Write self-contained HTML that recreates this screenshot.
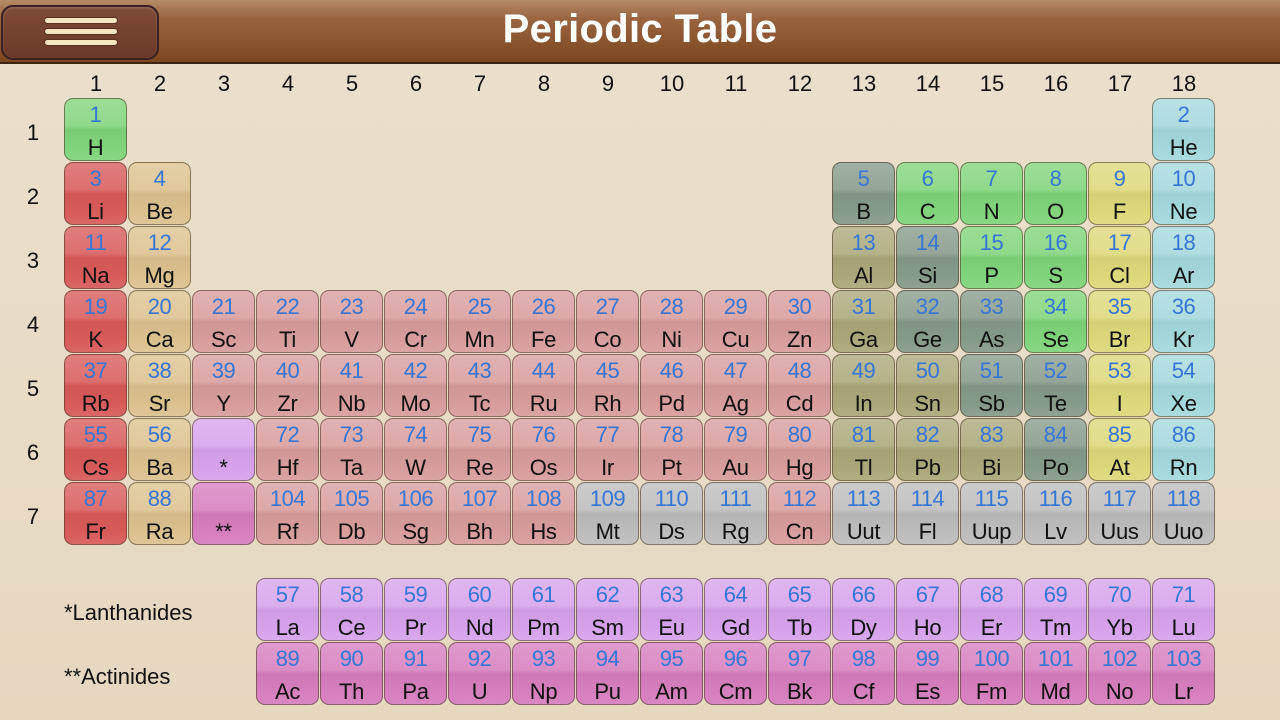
<!DOCTYPE html>
<html><head><meta charset="utf-8"><style>
*{margin:0;padding:0;box-sizing:border-box}
body{width:1280px;height:720px;overflow:hidden;font-family:"Liberation Sans",sans-serif;background:linear-gradient(#ebe0cc,#e6d8bf);position:relative}
.hdr{position:absolute;left:0;top:0;width:1280px;height:64px;background:linear-gradient(#b58a68 0%,#9a6440 30%,#7c4620 100%);border-bottom:2px solid #3e2412}
.hdr h1{position:absolute;left:0;right:0;top:7px;text-align:center;color:#fff;font-size:40px;font-weight:bold;letter-spacing:0.3px}
.menu{position:absolute;left:1px;top:5px;width:158px;height:55px;border-radius:12px;border:2px solid #3a2020;background:linear-gradient(#7e4c38,#6a3a28);box-shadow:inset 0 1px 2px rgba(255,255,255,.2)}
.menu i{position:absolute;left:41px;width:74px;height:7px;border-radius:4px;background:#f4e6c0;border:1px solid #5a3020}
.cn{position:absolute;font-size:22px;color:#111;width:64px;text-align:center}
.rn{position:absolute;left:20px;font-size:22px;color:#111;width:26px;text-align:center}
.g{position:absolute;left:64px;display:grid;grid-template-columns:repeat(18,64px);grid-auto-rows:64px}
.g2{position:absolute;left:256px;top:578px;display:grid;grid-template-columns:repeat(15,64px);grid-template-rows:repeat(2,64px)}
.c{width:63px;height:63px;border-radius:9px;border:1px solid rgba(70,50,30,.55);position:relative;text-align:center;
background:linear-gradient(rgba(255,255,255,.22),rgba(255,255,255,.12) 44%,rgba(0,0,0,.04) 50%,rgba(0,0,0,0) 80%,rgba(255,255,255,.08)),var(--c)}
.c b{position:absolute;left:0;right:0;top:2px;font-weight:normal;font-size:22px;line-height:28px;color:#3676d6;letter-spacing:-0.5px}
.c s{position:absolute;left:0;right:0;top:35px;text-decoration:none;font-size:22px;line-height:28px;color:#111;letter-spacing:-0.3px}
.a{--c:#d85a5a}.e{--c:#dcc18e}.t{--c:#d89c9c}.p{--c:#aaa87a}.m{--c:#869a8a}.n{--c:#80d47a}.h{--c:#dcd87a}.o{--c:#a4d8dc}.u{--c:#bcbcbc}.L{--c:#d6a2ec}.A{--c:#d67ebe}
.lab{position:absolute;left:64px;font-size:22px;color:#111}
</style></head><body>
<div class="hdr"><div class="menu"><i style="top:10px"></i><i style="top:21px"></i><i style="top:32px"></i></div><h1>Periodic Table</h1></div>
<div class="cn" style="left:64px;top:71px">1</div><div class="cn" style="left:128px;top:71px">2</div><div class="cn" style="left:192px;top:71px">3</div><div class="cn" style="left:256px;top:71px">4</div><div class="cn" style="left:320px;top:71px">5</div><div class="cn" style="left:384px;top:71px">6</div><div class="cn" style="left:448px;top:71px">7</div><div class="cn" style="left:512px;top:71px">8</div><div class="cn" style="left:576px;top:71px">9</div><div class="cn" style="left:640px;top:71px">10</div><div class="cn" style="left:704px;top:71px">11</div><div class="cn" style="left:768px;top:71px">12</div><div class="cn" style="left:832px;top:71px">13</div><div class="cn" style="left:896px;top:71px">14</div><div class="cn" style="left:960px;top:71px">15</div><div class="cn" style="left:1024px;top:71px">16</div><div class="cn" style="left:1088px;top:71px">17</div><div class="cn" style="left:1152px;top:71px">18</div>
<div class="rn" style="top:120px">1</div><div class="rn" style="top:184px">2</div><div class="rn" style="top:248px">3</div><div class="rn" style="top:312px">4</div><div class="rn" style="top:376px">5</div><div class="rn" style="top:440px">6</div><div class="rn" style="top:504px">7</div>
<div class="g" style="top:98px;grid-template-rows:repeat(3,64px)">
<div class="c n" style="grid-area:1/1"><b>1</b><s>H</s></div>
<div class="c o" style="grid-area:1/18"><b>2</b><s>He</s></div>
<div class="c a" style="grid-area:2/1"><b>3</b><s>Li</s></div><div class="c e" style="grid-area:2/2"><b>4</b><s>Be</s></div>
<div class="c m" style="grid-area:2/13"><b>5</b><s>B</s></div><div class="c n" style="grid-area:2/14"><b>6</b><s>C</s></div><div class="c n" style="grid-area:2/15"><b>7</b><s>N</s></div><div class="c n" style="grid-area:2/16"><b>8</b><s>O</s></div><div class="c h" style="grid-area:2/17"><b>9</b><s>F</s></div><div class="c o" style="grid-area:2/18"><b>10</b><s>Ne</s></div>
<div class="c a" style="grid-area:3/1"><b>11</b><s>Na</s></div><div class="c e" style="grid-area:3/2"><b>12</b><s>Mg</s></div>
<div class="c p" style="grid-area:3/13"><b>13</b><s>Al</s></div><div class="c m" style="grid-area:3/14"><b>14</b><s>Si</s></div><div class="c n" style="grid-area:3/15"><b>15</b><s>P</s></div><div class="c n" style="grid-area:3/16"><b>16</b><s>S</s></div><div class="c h" style="grid-area:3/17"><b>17</b><s>Cl</s></div><div class="c o" style="grid-area:3/18"><b>18</b><s>Ar</s></div>
</div>
<div class="g" style="top:290px">
<div class="c a"><b>19</b><s>K</s></div><div class="c e"><b>20</b><s>Ca</s></div><div class="c t"><b>21</b><s>Sc</s></div><div class="c t"><b>22</b><s>Ti</s></div><div class="c t"><b>23</b><s>V</s></div><div class="c t"><b>24</b><s>Cr</s></div><div class="c t"><b>25</b><s>Mn</s></div><div class="c t"><b>26</b><s>Fe</s></div><div class="c t"><b>27</b><s>Co</s></div><div class="c t"><b>28</b><s>Ni</s></div><div class="c t"><b>29</b><s>Cu</s></div><div class="c t"><b>30</b><s>Zn</s></div><div class="c p"><b>31</b><s>Ga</s></div><div class="c m"><b>32</b><s>Ge</s></div><div class="c m"><b>33</b><s>As</s></div><div class="c n"><b>34</b><s>Se</s></div><div class="c h"><b>35</b><s>Br</s></div><div class="c o"><b>36</b><s>Kr</s></div>
<div class="c a"><b>37</b><s>Rb</s></div><div class="c e"><b>38</b><s>Sr</s></div><div class="c t"><b>39</b><s>Y</s></div><div class="c t"><b>40</b><s>Zr</s></div><div class="c t"><b>41</b><s>Nb</s></div><div class="c t"><b>42</b><s>Mo</s></div><div class="c t"><b>43</b><s>Tc</s></div><div class="c t"><b>44</b><s>Ru</s></div><div class="c t"><b>45</b><s>Rh</s></div><div class="c t"><b>46</b><s>Pd</s></div><div class="c t"><b>47</b><s>Ag</s></div><div class="c t"><b>48</b><s>Cd</s></div><div class="c p"><b>49</b><s>In</s></div><div class="c p"><b>50</b><s>Sn</s></div><div class="c m"><b>51</b><s>Sb</s></div><div class="c m"><b>52</b><s>Te</s></div><div class="c h"><b>53</b><s>I</s></div><div class="c o"><b>54</b><s>Xe</s></div>
<div class="c a"><b>55</b><s>Cs</s></div><div class="c e"><b>56</b><s>Ba</s></div><div class="c L"><b></b><s>*</s></div><div class="c t"><b>72</b><s>Hf</s></div><div class="c t"><b>73</b><s>Ta</s></div><div class="c t"><b>74</b><s>W</s></div><div class="c t"><b>75</b><s>Re</s></div><div class="c t"><b>76</b><s>Os</s></div><div class="c t"><b>77</b><s>Ir</s></div><div class="c t"><b>78</b><s>Pt</s></div><div class="c t"><b>79</b><s>Au</s></div><div class="c t"><b>80</b><s>Hg</s></div><div class="c p"><b>81</b><s>Tl</s></div><div class="c p"><b>82</b><s>Pb</s></div><div class="c p"><b>83</b><s>Bi</s></div><div class="c m"><b>84</b><s>Po</s></div><div class="c h"><b>85</b><s>At</s></div><div class="c o"><b>86</b><s>Rn</s></div>
<div class="c a"><b>87</b><s>Fr</s></div><div class="c e"><b>88</b><s>Ra</s></div><div class="c A"><b></b><s>**</s></div><div class="c t"><b>104</b><s>Rf</s></div><div class="c t"><b>105</b><s>Db</s></div><div class="c t"><b>106</b><s>Sg</s></div><div class="c t"><b>107</b><s>Bh</s></div><div class="c t"><b>108</b><s>Hs</s></div><div class="c u"><b>109</b><s>Mt</s></div><div class="c u"><b>110</b><s>Ds</s></div><div class="c u"><b>111</b><s>Rg</s></div><div class="c t"><b>112</b><s>Cn</s></div><div class="c u"><b>113</b><s>Uut</s></div><div class="c u"><b>114</b><s>Fl</s></div><div class="c u"><b>115</b><s>Uup</s></div><div class="c u"><b>116</b><s>Lv</s></div><div class="c u"><b>117</b><s>Uus</s></div><div class="c u"><b>118</b><s>Uuo</s></div>
</div>
<div class="lab" style="top:600px">*Lanthanides</div>
<div class="lab" style="top:664px">**Actinides</div>
<div class="g2">
<div class="c L"><b>57</b><s>La</s></div><div class="c L"><b>58</b><s>Ce</s></div><div class="c L"><b>59</b><s>Pr</s></div><div class="c L"><b>60</b><s>Nd</s></div><div class="c L"><b>61</b><s>Pm</s></div><div class="c L"><b>62</b><s>Sm</s></div><div class="c L"><b>63</b><s>Eu</s></div><div class="c L"><b>64</b><s>Gd</s></div><div class="c L"><b>65</b><s>Tb</s></div><div class="c L"><b>66</b><s>Dy</s></div><div class="c L"><b>67</b><s>Ho</s></div><div class="c L"><b>68</b><s>Er</s></div><div class="c L"><b>69</b><s>Tm</s></div><div class="c L"><b>70</b><s>Yb</s></div><div class="c L"><b>71</b><s>Lu</s></div>
<div class="c A"><b>89</b><s>Ac</s></div><div class="c A"><b>90</b><s>Th</s></div><div class="c A"><b>91</b><s>Pa</s></div><div class="c A"><b>92</b><s>U</s></div><div class="c A"><b>93</b><s>Np</s></div><div class="c A"><b>94</b><s>Pu</s></div><div class="c A"><b>95</b><s>Am</s></div><div class="c A"><b>96</b><s>Cm</s></div><div class="c A"><b>97</b><s>Bk</s></div><div class="c A"><b>98</b><s>Cf</s></div><div class="c A"><b>99</b><s>Es</s></div><div class="c A"><b>100</b><s>Fm</s></div><div class="c A"><b>101</b><s>Md</s></div><div class="c A"><b>102</b><s>No</s></div><div class="c A"><b>103</b><s>Lr</s></div>
</div>
</body></html>
